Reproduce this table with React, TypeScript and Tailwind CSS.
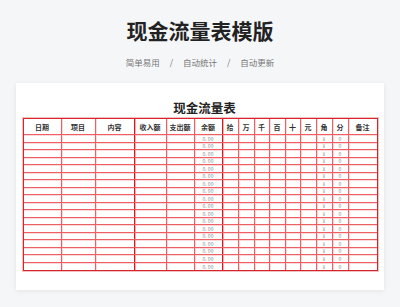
import React from "react";

const cols = [
  { w: 37, label: "日期" },
  { w: 34, label: "项目" },
  { w: 39, label: "内容" },
  { w: 32, label: "收入额" },
  { w: 28, label: "支出额" },
  { w: 28, label: "余额" },
  { w: 16, label: "拾" },
  { w: 16, label: "万" },
  { w: 15, label: "千" },
  { w: 16, label: "百" },
  { w: 15, label: "十" },
  { w: 16, label: "元" },
  { w: 16, label: "角" },
  { w: 16, label: "分" },
  { w: 30, label: "备注" },
];

function cellClass(i: number) {
  if (i === 0) return "flex items-center justify-center";
  if (i === 3 || i === 6)
    return "flex items-center justify-center border-l border-[#e0141c] shadow-[inset_1px_0_0_#f5aeb1]";
  return "flex items-center justify-center border-l border-[#ec5f63] shadow-[inset_1px_0_0_#fbd9da]";
}

export default function App() {
  const rows = Array.from({ length: 18 });
  const font = { fontFamily: '"Noto Sans CJK SC", "Noto Sans", sans-serif' };
  const grid = "grid grid-cols-[37px_34px_39px_32px_28px_28px_16px_16px_15px_16px_15px_16px_16px_16px_1fr]";
  return (
    <div className="w-[400px] h-[307px] bg-[#f5f6f8] flex flex-col items-center overflow-hidden" style={font}>
      <h1 className="mt-[16px] text-[21px] leading-[28px] font-bold text-[#222]">现金流量表模版</h1>
      <div className="mt-[12px] flex items-center text-[8.5px] leading-[12px] text-[#777]">
        <span>简单易用</span>
        <span className="mx-[10px]">/</span>
        <span>自动统计</span>
        <span className="mx-[10px]">/</span>
        <span>自动更新</span>
      </div>
      <div className="mt-[15px] w-[368px] h-[207px] bg-white shadow-[0_1px_5px_rgba(0,0,0,0.08)] flex flex-col items-center">
        <div className="mt-[18px] pl-[9px] text-[12.5px] leading-[14px] font-bold text-[#222]">现金流量表</div>
        <div className="mt-[3px] w-[355px] border border-[#d6262c] shadow-[0_0_0_1px_#f5c0c2] flex flex-col">
          <div className={`${grid} h-[16px] border-b border-[#ec5f63] shadow-[0_1px_0_#fbd9da] text-[7px] leading-[8px] font-semibold text-[#333]`}>
            {cols.map((c, i) => (
              <div key={i} className={cellClass(i)}>
                {c.label}
              </div>
            ))}
          </div>
          {rows.map((_, r) => (
            <div
              key={r}
              className={
                r === rows.length - 1
                  ? `${grid} h-[7.5px] text-[5px] leading-[5px] text-[#888]`
                  : `${grid} h-[7.5px] border-b border-[#ec5f63] shadow-[0_1px_0_#fbd9da] text-[5px] leading-[5px] text-[#888]`
              }
            >
              {cols.map((c, i) => (
                <div key={i} className={cellClass(i)}>
                  {i === 5 ? "0. 00" : i === 12 ? "¥" : i === 13 ? "0" : ""}
                </div>
              ))}
            </div>
          ))}
        </div>
      </div>
    </div>
  );
}
